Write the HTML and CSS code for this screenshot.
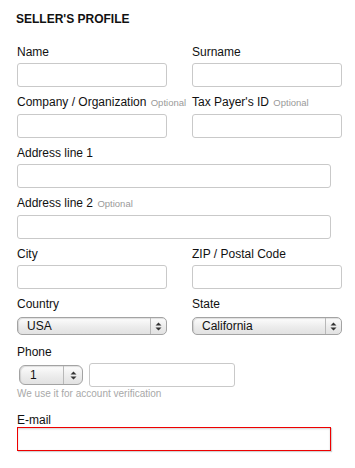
FILE: index.html
```html
<!DOCTYPE html>
<html>
<head>
<meta charset="utf-8">
<link rel="stylesheet" href="styles.css">
</head>
<body>
<form class="profile">
  <h2 class="title">SELLER'S PROFILE</h2>

  <div class="row two">
    <div class="field">
      <label class="label">Name</label>
      <input class="input" type="text">
    </div>
    <div class="field">
      <label class="label">Surname</label>
      <input class="input" type="text">
    </div>
  </div>

  <div class="row two">
    <div class="field">
      <label class="label">Company / Organization <span class="opt">Optional</span></label>
      <input class="input" type="text">
    </div>
    <div class="field">
      <label class="label">Tax Payer's ID <span class="opt">Optional</span></label>
      <input class="input" type="text">
    </div>
  </div>

  <div class="row">
    <div class="field">
      <label class="label">Address line 1</label>
      <input class="input wide" type="text">
    </div>
  </div>

  <div class="row">
    <div class="field">
      <label class="label">Address line 2 <span class="opt">Optional</span></label>
      <input class="input wide" type="text">
    </div>
  </div>

  <div class="row two">
    <div class="field">
      <label class="label">City</label>
      <input class="input" type="text">
    </div>
    <div class="field">
      <label class="label">ZIP / Postal Code</label>
      <input class="input" type="text">
    </div>
  </div>

  <div class="row two">
    <div class="field">
      <label class="label">Country</label>
      <div class="select">
        <span class="select-value">USA</span>
        <span class="arrows"><svg width="7" height="9" viewBox="0 0 7 9"><path d="M3.5 0.5 L6.5 3.5 H0.5 Z M3.5 8.5 L6.5 5.5 H0.5 Z" fill="#333"/></svg></span>
      </div>
    </div>
    <div class="field">
      <label class="label">State</label>
      <div class="select">
        <span class="select-value">California</span>
        <span class="arrows"><svg width="7" height="9" viewBox="0 0 7 9"><path d="M3.5 0.5 L6.5 3.5 H0.5 Z M3.5 8.5 L6.5 5.5 H0.5 Z" fill="#333"/></svg></span>
      </div>
    </div>
  </div>

  <div class="row phone-row">
    <label class="label">Phone</label>
    <div class="phone">
      <div class="select small">
        <span class="select-value">1</span>
        <span class="arrows"><svg width="7" height="9" viewBox="0 0 7 9"><path d="M3.5 0.5 L6.5 3.5 H0.5 Z M3.5 8.5 L6.5 5.5 H0.5 Z" fill="#333"/></svg></span>
      </div>
      <input class="input phone-input" type="text">
    </div>
    <div class="help">We use it for account verification</div>
  </div>

  <div class="row email-row">
    <div class="field">
      <label class="label tight">E-mail</label>
      <input class="input wide error" type="text">
    </div>
  </div>
</form>
</body>
</html>
```

FILE: styles.css
```css
html, body {
  margin: 0;
  padding: 0;
  background: #fff;
}

body {
  font-family: "Liberation Sans", Arial, Helvetica, sans-serif;
  color: #111;
}

.profile {
  padding: 12px 0 0 17px;
}

.title {
  margin: 0 0 19px -1px;
  font-size: 12px;
  line-height: 14px;
  font-weight: bold;
  color: #111;
}

.row {
  margin-bottom: 8px;
}

.two {
  display: grid;
  grid-template-columns: 150px 150px;
  column-gap: 25px;
}

.field {
  display: flex;
  flex-direction: column;
  align-items: flex-start;
}

.label {
  display: block;
  font-size: 12px;
  line-height: 14px;
  margin-bottom: 4px;
  color: #111;
  white-space: nowrap;
}

.label.tight {
  margin-bottom: 0;
}

.opt {
  font-size: 9.5px;
  color: #9a9a9a;
  margin-left: 1px;
}

.input {
  box-sizing: border-box;
  width: 150px;
  height: 24px;
  margin: 0;
  border: 1px solid #c9c9c9;
  border-radius: 3px;
  background: #fff;
  font: 12px "Liberation Sans", Arial, sans-serif;
  padding: 0 6px;
  outline: none;
}

.input.wide {
  width: 314px;
}

.input.error {
  border: 1px solid #ee0000;
  border-radius: 0;
  box-shadow: inset 0 1px 2px rgba(0, 0, 0, 0.18), 1px 1px 1px rgba(0, 0, 0, 0.18);
}

.select {
  position: relative;
  box-sizing: border-box;
  width: 150px;
  height: 18px;
  margin: 2px 0 2px;
  border: 1px solid #a3a3a3;
  border-radius: 5px;
  background: linear-gradient(#fdfdfd, #ececec 55%, #e2e2e2);
  box-shadow: inset 1px 1px 1px rgba(0, 0, 0, 0.12);
  display: flex;
  align-items: center;
}

.select-value {
  flex: 1;
  padding-left: 9px;
  font-size: 12px;
  line-height: 14px;
  color: #111;
}

.arrows {
  align-self: stretch;
  width: 15px;
  border-left: 1px solid #b8b8b8;
  display: flex;
  align-items: center;
  justify-content: center;
}

.select.small {
  width: 64px;
  height: 20px;
  margin: 0 0 0 2px;
  border-radius: 6px;
}

.select.small .select-value {
  padding-left: 10px;
}

.select.small .arrows {
  width: 18px;
}

.phone {
  display: flex;
  align-items: center;
  gap: 6px;
}

.phone-input {
  width: 146px;
}

.help {
  margin-top: 1px;
  font-size: 10px;
  line-height: 12px;
  color: #a8a8a8;
}

.email-row {
  margin-top: 13px;
}
```
